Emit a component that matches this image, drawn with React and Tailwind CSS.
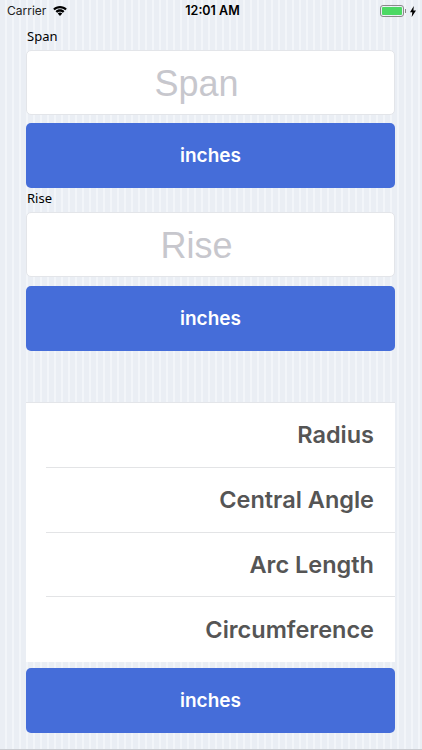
import React from 'react';

const sans = "font-['Liberation_Sans',sans-serif]";

const UnitButton = ({ className = '' }) => (
  <button className={`h-[65px] w-full rounded-[5px] bg-[#456dd9] pt-[2px] text-[19px] font-semibold text-white font-['Inter',sans-serif] ${className}`}>
    inches
  </button>
);

const Field = ({ label }) => (
  <div className="flex flex-col">
    <label className="h-[24px] pl-[1px] text-[13px] leading-[20px] text-black font-['Noto_Sans',sans-serif]">{label}</label>
    <div className={`flex h-[65px] items-center justify-center rounded-[5px] border border-[#e3e5e9] bg-white pr-[28px] pt-[2px] text-[36px] text-[#c7c7cd] ${sans}`}>
      {label}
    </div>
  </div>
);

const StatusBar = () => (
  <div className="flex h-[22px] items-center justify-between pl-[7px] pr-[6px] text-black">
    <div className="flex w-[140px] items-center gap-[7px]">
      <span className="text-[12px] font-['Inter',sans-serif] text-[#222]">Carrier</span>
      <svg width="14" height="10" viewBox="0 0 15 11" fill="black">
        <path d="M7.5 0C4.600 0 2 1.100 0 3l1.700 1.800C3.200 3.300 5.200 2.400 7.500 2.400s4.300.9 5.800 2.400L15 3C13 1.100 10.400 0 7.500 0z" />
        <path d="M7.500 3.700c-1.900 0-3.600.7-4.900 2l1.700 1.800c.8-.8 2-1.300 3.200-1.300s2.400.5 3.200 1.300l1.700-1.800c-1.300-1.300-3-2-4.900-2z" />
        <path d="M7.500 7.200c-1 0-1.900.4-2.500 1L7.500 11 10 8.200c-.6-.6-1.500-1-2.500-1z" />
      </svg>
    </div>
    <span className="pl-[2px] text-[12.5px] font-semibold font-['Inter',sans-serif]">12:01 AM</span>
    <div className="flex w-[140px] items-center justify-end gap-[4px]">
      <div className="flex items-center gap-[1px]">
        <div className="h-[12px] w-[24px] rounded-[3px] border border-[#8a8a8a] p-[1px]">
          <div className="h-full w-full rounded-[1px] bg-[#4cd964]" />
        </div>
        <div className="h-[4px] w-[1px] bg-[#8a8a8a]" />
      </div>
      <svg width="6" height="11" viewBox="0 0 6 11" fill="black">
        <path d="M3.800 0 0 6.200h2.300L1.700 11 6 4.500H3.400z" />
      </svg>
    </div>
  </div>
);

const rows = ['Radius', 'Central Angle', 'Arc Length', 'Circumference'];

export default function App() {
  return (
    <div className="h-[750px] w-[422px] overflow-hidden border-b border-[#c9cbd0] bg-[repeating-linear-gradient(90deg,#eaeef4_0px,#eaeef4_5px,#f2f5f9_5px,#f2f5f9_7px)]">
      <StatusBar />
      <div className="ml-[26px] mr-[27px] flex flex-col pt-[4px]">
        <Field label="Span" />
        <UnitButton className="mt-[8px]" />
        <Field label="Rise" />
        <UnitButton className="mt-[9px]" />
        <div className={`mt-[51px] flex h-[260px] flex-col border-t border-[#e3e5e9] bg-white ${sans}`}>
          {rows.map((row, i) => (
            <div key={row} className="flex h-[65px] flex-col pl-[20px]">
              <div className={`flex flex-1 items-center justify-end pr-[21px] text-[23.5px] font-semibold text-[#555555] font-['Inter',sans-serif] ${i < 3 ? 'border-b border-[#e3e4e6]' : ''}`}>
                {row}
              </div>
            </div>
          ))}
        </div>
        <UnitButton className="mt-[6px]" />
      </div>
    </div>
  );
}
